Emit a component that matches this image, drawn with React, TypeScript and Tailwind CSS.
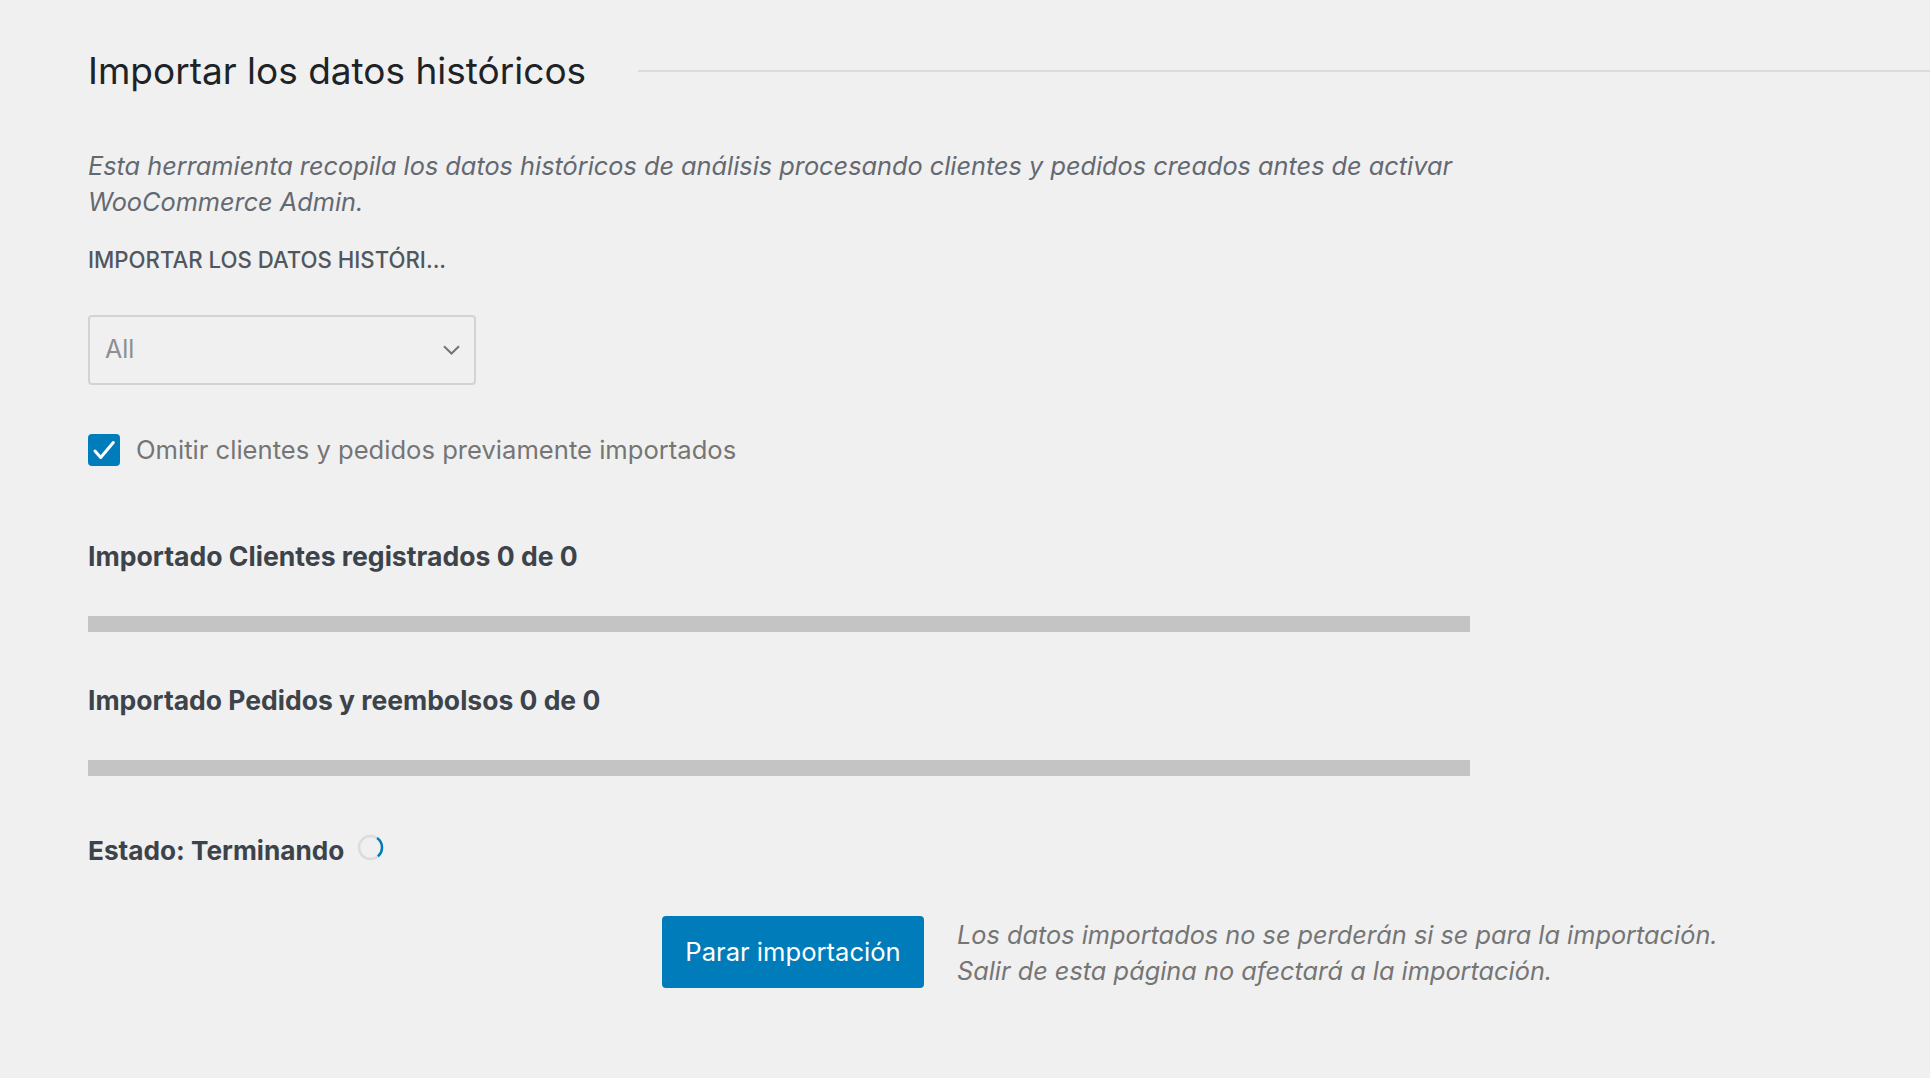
export default function App() {
  return (
    <div className="min-h-screen bg-[#f0f0f0] pt-[49px] pl-[88px] font-['Inter',sans-serif]">
      {/* Heading with rule */}
      <div className="flex items-center">
        <h2 className="text-[37px] leading-[44px] font-normal text-[#1d2327]">Importar los datos históricos</h2>
        <div className="ml-[52px] h-[2px] flex-1 bg-[#dcdcde]" />
      </div>

      <div className="w-[1382px]">
        <p className="mt-[55px] text-[25.3px] leading-[36px] italic text-[#646970]">
          Esta herramienta recopila los datos históricos de análisis procesando clientes y pedidos creados antes de activar
          WooCommerce Admin.
        </p>

        <div className="mt-[26px] text-[22.2px] leading-[28px] font-medium uppercase text-[#50575e]">
          IMPORTAR LOS DATOS HISTÓRI...
        </div>

        {/* Select */}
        <div className="mt-[41px] flex h-[70px] w-[388px] items-center justify-between rounded-[4px] border-2 border-[#d3d3d3] pl-[15px] pr-[14px]">
          <span className="text-[25px] text-[#8c8f94]">All</span>
          <svg width="17" height="10" viewBox="0 0 17 10" fill="none">
            <path d="M1 1.2 L8.5 8.5 L16 1.2" stroke="#757575" strokeWidth="2" />
          </svg>
        </div>

        {/* Checkbox */}
        <label className="mt-[49px] flex h-[32px] items-center gap-[16px]">
          <span className="flex h-[32px] w-[32px] items-center justify-center rounded-[4px] bg-[#007cba]">
            <svg width="32" height="32" viewBox="0 0 32 32" fill="none">
              <path d="M7 17 L12.7 23.5 L25.3 8.5" stroke="#fff" strokeWidth="3" strokeLinecap="round" strokeLinejoin="round" />
            </svg>
          </span>
          <span className="text-[25.6px] text-[#757575]">Omitir clientes y pedidos previamente importados</span>
        </label>

        {/* Progress 1 */}
        <div className="mt-[74px] text-[26.6px] leading-[32px] font-bold text-[#3c434a]">
          Importado Clientes registrados 0 de 0
        </div>
        <div className="mt-[44px] h-[16px] w-full bg-[#c4c4c4]" />

        {/* Progress 2 */}
        <div className="mt-[52px] text-[26.5px] leading-[32px] font-bold text-[#3c434a]">
          Importado Pedidos y reembolsos 0 de 0
        </div>
        <div className="mt-[44px] h-[16px] w-full bg-[#c4c4c4]" />

        {/* Status */}
        <div className="mt-[59px] flex h-[32px] items-center gap-[13px]">
          <span className="text-[26.2px] font-bold text-[#3c434a]">Estado: Terminando</span>
          <svg width="27" height="27" viewBox="0 0 27 27" fill="none" className="-translate-y-[4px]">
            <circle cx="13.5" cy="13.5" r="11.5" stroke="#dcdcde" strokeWidth="2.5" />
            <path d="M20.1 4.08 A11.5 11.5 0 0 1 20.89 22.31" stroke="#007cba" strokeWidth="2.5" />
          </svg>
        </div>
      </div>

      {/* Actions */}
      <div className="mt-[49px] ml-[574px] flex items-start">
        <button className="h-[72px] w-[262px] rounded-[4px] bg-[#007cba] text-[25.6px] text-white">
          Parar importación
        </button>
        <p className="ml-[33px] mt-[1px] text-[25.3px] leading-[36px] italic text-[#757575]">
          Los datos importados no se perderán si se para la importación.
          <br />
          Salir de esta página no afectará a la importación.
        </p>
      </div>
    </div>
  );
}
